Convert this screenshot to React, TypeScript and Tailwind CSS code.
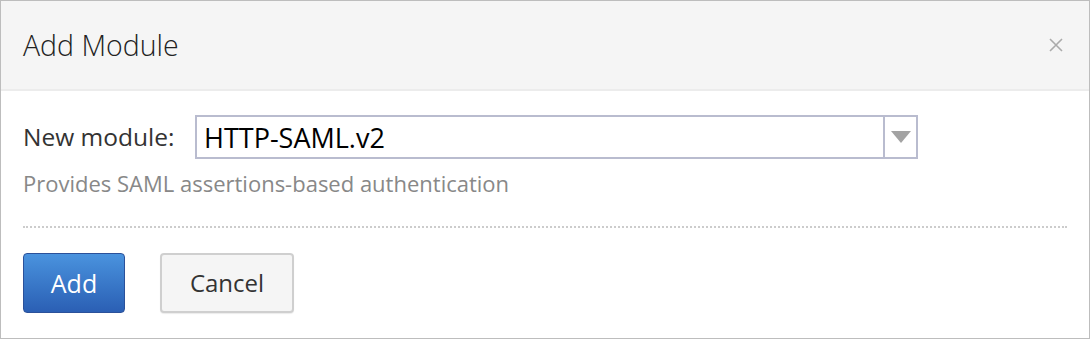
import React from 'react';

export default function App() {
  return (
    <div
      className="w-[1090px] h-[339px] bg-white border border-[#bdbdbd] flex flex-col"
      style={{ fontFamily: '"Open Sans", "Noto Sans", sans-serif' }}
    >
      <div className="h-[90px] bg-[#f5f5f5] border-b-2 border-[#ececec] flex items-center justify-between pl-[22px] pr-[26px] shrink-0">
        <h1 className="text-[28.5px] font-light text-[#222] leading-none">Add Module</h1>
        <svg width="14" height="14" viewBox="0 0 14 14" className="text-[#ababab]">
          <path d="M1 1L13 13M13 1L1 13" stroke="currentColor" strokeWidth="1.6" />
        </svg>
      </div>
      <div className="px-[22px] pt-[24px]">
        <div className="flex items-center">
          <label className="w-[172px] shrink-0 text-[24.5px] leading-[30px] text-[#333] whitespace-nowrap">
            New module:
          </label>
          <div className="w-[723px] h-[44px] border-2 border-[#b9bccf] flex items-stretch">
            <div className="flex-1 flex items-center pl-[7px] text-[27px] leading-none text-black">
              HTTP-SAML.v2
            </div>
            <div className="w-[33px] border-l-2 border-[#b9bccf] flex items-center justify-center">
              <svg width="20" height="12" viewBox="0 0 20 12">
                <path d="M0 0H20L10 12Z" fill="#a3a3a3" />
              </svg>
            </div>
          </div>
        </div>
        <p className="mt-[9px] text-[22px] leading-[30px] text-[#888]">
          Provides SAML assertions-based authentication
        </p>
        <div className="mt-[28px] border-t-2 border-dotted border-[#cccccc]" />
        <div className="mt-[25px] flex gap-[35px]">
          <button className="w-[102px] h-[60px] rounded-[4px] border border-[#2b519a] bg-gradient-to-b from-[#4a93de] to-[#2b5fb4] text-white text-[25px] leading-none">
            Add
          </button>
          <button className="w-[134px] h-[60px] rounded-[4px] border-2 border-[#cfcfcf] bg-[#f5f5f5] text-[#333] text-[24px] leading-none shadow-[0_1px_1px_rgba(0,0,0,0.08)]">
            Cancel
          </button>
        </div>
      </div>
    </div>
  );
}
